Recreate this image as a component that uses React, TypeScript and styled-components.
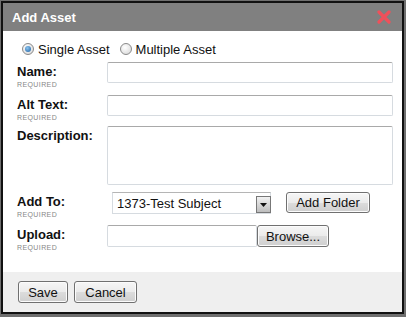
import React from "react";
import styled, { createGlobalStyle } from "styled-components";

const Global = createGlobalStyle`
  html, body { margin: 0; padding: 0; background: #6f6f6f; }
  body { font-family: "Liberation Sans", Arial, sans-serif; }
`;

const Stage = styled.div`
  width: 406px;
  height: 317px;
  padding: 1px 2px 3px 1px;
  box-sizing: border-box;
  background: #6f6f6f;
`;

const Dialog = styled.div`
  height: 100%;
  border: 2px solid #111;
  box-sizing: border-box;
  background: #fff;
  display: flex;
  flex-direction: column;
`;

const TitleBar = styled.div`
  height: 28px;
  background: #808080;
  display: flex;
  align-items: center;
  justify-content: space-between;
  padding: 0 11px 0 9px;
`;

const Title = styled.span`
  color: #fff;
  font-weight: bold;
  font-size: 13px;
`;

const Body = styled.div`
  flex: 1;
  padding: 8px 0 0 14px;
  display: flex;
  flex-direction: column;
`;

const RadioRow = styled.div`
  display: flex;
  align-items: center;
  padding-left: 2px;
  height: 20px;
  font-size: 13px;
  color: #111;
`;

const RadioLabel = styled.label`
  display: flex;
  align-items: center;
  margin-right: 7px;
`;

const RadioDot = styled.span<{ $checked?: boolean }>`
  width: 12px;
  height: 12px;
  border-radius: 50%;
  box-sizing: border-box;
  border: 1px solid #8a8a8a;
  background: radial-gradient(circle at 40% 35%, #fff, #d4d4d4);
  margin: 0 4px 0 3px;
  display: flex;
  align-items: center;
  justify-content: center;
  &::after {
    content: "";
    width: 6px;
    height: 6px;
    border-radius: 50%;
    background: ${(p) => (p.$checked ? "radial-gradient(circle at 40% 35%, #8cc4ee, #1b5fa3)" : "transparent")};
  }
`;

const Row = styled.div<{ $h: number; $mt?: number }>`
  display: grid;
  grid-template-columns: 90px 1fr;
  height: ${(p) => p.$h}px;
  margin-top: ${(p) => p.$mt ?? 0}px;
`;

const LabelBox = styled.div`
  display: flex;
  flex-direction: column;
  padding-top: 2px;
`;

const Label = styled.span`
  font-weight: bold;
  font-size: 13px;
  color: #111;
  line-height: 15px;
`;

const Req = styled.span`
  font-size: 7px;
  color: #888;
  letter-spacing: 0.4px;
  line-height: 9px;
  margin-top: 1px;
`;

const TextInput = styled.div<{ $w?: number; $h?: number }>`
  width: ${(p) => (p.$w ? `${p.$w}px` : "auto")};
  margin-right: ${(p) => (p.$w ? "0" : "9px")};
  height: ${(p) => p.$h ?? 21}px;
  box-sizing: border-box;
  border: 1px solid #d6dbe0;
  border-top-color: #a9a9a9;
  border-radius: 2px;
  background: #fff;
`;

const Controls = styled.div<{ $pl?: number }>`
  display: flex;
  align-items: flex-start;
  padding-left: ${(p) => p.$pl ?? 0}px;
`;

const Select = styled.div`
  width: 159px;
  height: 22px;
  box-sizing: border-box;
  border: 1px solid #d6dbe0;
  border-top-color: #b5b5b5;
  display: flex;
  align-items: center;
  font-size: 13px;
  color: #111;
  padding-left: 4px;
`;

const SelectText = styled.span`
  flex: 1;
`;

const Arrow = styled.span`
  width: 15px;
  height: 17px;
  margin-top: 3px;
  align-self: flex-start;
  box-sizing: border-box;
  border: 1px solid #777;
  background: linear-gradient(#f2f2f2, #bdbdbd);
  display: flex;
  align-items: center;
  justify-content: center;
  margin-right: -1px;
`;

const Button = styled.button<{ $w: number; $ml?: number; $h?: number }>`
  width: ${(p) => p.$w}px;
  height: ${(p) => p.$h ?? 21}px;
  margin-left: ${(p) => p.$ml ?? 0}px;
  font-family: "Liberation Sans", Arial, sans-serif;
  font-size: 13px;
  color: #111;
  padding: 0;
  border: 1px solid #707070;
  border-radius: 3px;
  background: linear-gradient(#f6f6f6 0%, #ebebeb 50%, #dcdcdc 51%, #cfcfcf 100%);
  box-shadow: inset 0 0 0 1px #fcfcfc;
`;

const Footer = styled.div`
  height: 40px;
  background: #efefef;
  display: flex;
  align-items: flex-start;
  padding: 9px 0 0 15px;
  box-sizing: border-box;
  gap: 6px;
`;

const CloseIcon = () => (
  <svg width="14" height="14" viewBox="0 0 14 14">
    <path d="M2 2 L12 12 M12 2 L2 12" stroke="#f0505a" strokeWidth="3.2" strokeLinecap="round" />
  </svg>
);

export default function App() {
  return (
    <>
      <Global />
      <Stage>
        <Dialog>
          <TitleBar>
            <Title>Add Asset</Title>
            <CloseIcon />
          </TitleBar>
          <Body>
            <RadioRow>
              <RadioLabel>
                <RadioDot $checked />
                Single Asset
              </RadioLabel>
              <RadioLabel>
                <RadioDot />
                Multiple Asset
              </RadioLabel>
            </RadioRow>
            <Row $h={33} $mt={3}>
              <LabelBox>
                <Label>Name:</Label>
                <Req>REQUIRED</Req>
              </LabelBox>
              <TextInput />
            </Row>
            <Row $h={31}>
              <LabelBox>
                <Label>Alt Text:</Label>
                <Req>REQUIRED</Req>
              </LabelBox>
              <TextInput />
            </Row>
            <Row $h={66}>
              <LabelBox>
                <Label>Description:</Label>
              </LabelBox>
              <TextInput $h={59} />
            </Row>
            <Row $h={33}>
              <LabelBox>
                <Label>Add To:</Label>
                <Req>REQUIRED</Req>
              </LabelBox>
              <Controls $pl={5}>
                <Select>
                  <SelectText>1373-Test Subject</SelectText>
                  <Arrow>
                    <svg width="7" height="4" viewBox="0 0 7 4">
                      <path d="M0 0 H7 L3.5 4 Z" fill="#111" />
                    </svg>
                  </Arrow>
                </Select>
                <Button $w={84} $ml={15}>Add Folder</Button>
              </Controls>
            </Row>
            <Row $h={30}>
              <LabelBox>
                <Label>Upload:</Label>
                <Req>REQUIRED</Req>
              </LabelBox>
              <Controls>
                <TextInput $w={150} $h={22} />
                <Button $w={72} $h={22}>Browse...</Button>
              </Controls>
            </Row>
          </Body>
          <Footer>
            <Button $w={50} $h={22}>Save</Button>
            <Button $w={63} $h={22}>Cancel</Button>
          </Footer>
        </Dialog>
      </Stage>
    </>
  );
}
